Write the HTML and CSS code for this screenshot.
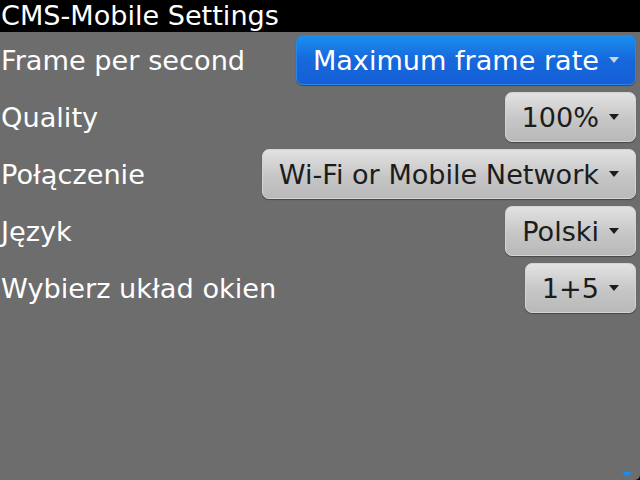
FILE: index.html
```html
<!DOCTYPE html>
<html>
<head>
<meta charset="utf-8">
<link rel="stylesheet" href="styles.css">
</head>
<body>
<div class="screen">
  <div class="titlebar">CMS-Mobile Settings</div>
  <div class="list">
    <div class="row">
      <span class="label">Frame per second</span>
      <span class="choice active">Maximum frame rate<span class="arrow"></span></span>
    </div>
    <div class="row">
      <span class="label">Quality</span>
      <span class="choice">100%<span class="arrow"></span></span>
    </div>
    <div class="row">
      <span class="label">Połączenie</span>
      <span class="choice">Wi-Fi or Mobile Network<span class="arrow"></span></span>
    </div>
    <div class="row">
      <span class="label">Język</span>
      <span class="choice">Polski<span class="arrow"></span></span>
    </div>
    <div class="row">
      <span class="label">Wybierz układ okien</span>
      <span class="choice">1+5<span class="arrow"></span></span>
    </div>
  </div>
  <div class="scroll-hint"></div>
</div>
</body>
</html>
```
FILE: styles.css
```css
html, body {
  margin: 0;
  padding: 0;
}
body {
  background: #000;
  font-family: "DejaVu Sans", sans-serif;
}
.screen {
  position: relative;
  width: 640px;
  height: 480px;
  background: #6d6d6d;
  border-bottom-right-radius: 5px;
  overflow: hidden;
}
.titlebar {
  height: 32px;
  background: #000;
  color: #fff;
  font-size: 27.1px;
  line-height: 32px;
  padding-left: 1px;
}
.list {
  display: flex;
  flex-direction: column;
  gap: 7px;
  padding: 3px 4px 0 1px;
}
.row {
  display: flex;
  align-items: center;
  justify-content: space-between;
  height: 50px;
}
.label {
  color: #fff;
  font-size: 27.2px;
}
.choice {
  display: flex;
  align-items: center;
  box-sizing: border-box;
  height: 50px;
  padding: 0 16px 0 16px;
  border-radius: 7px;
  font-size: 27.1px;
  color: #1c1c1c;
  background: linear-gradient(#e2e2e2, #c6c6c6 55%, #b9b9b9);
  border: 1px solid #d4d4d4;
  box-shadow: 0 1px 1px rgba(0,0,0,0.35);
}
.choice.active {
  color: #fff;
  background: linear-gradient(#1a8eef, #1668dc 50%, #155fd6);
  border-color: #2a86e6;
}
.arrow {
  width: 0;
  height: 0;
  margin-left: 10px;
  border-left: 5.5px solid transparent;
  border-right: 5.5px solid transparent;
  border-top: 6px solid #1c1c1c;
}
.choice.active .arrow {
  border-top-color: #c8d4e8;
}
.scroll-hint {
  position: absolute;
  right: 8px;
  bottom: 3px;
  width: 0;
  height: 0;
  border-left: 5px solid transparent;
  border-right: 5px solid transparent;
  border-top: 5px solid #1a8cf0;
}
```
